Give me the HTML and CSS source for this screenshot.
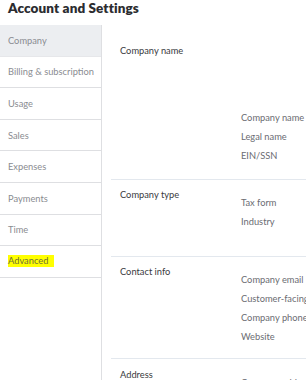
FILE: index.html
```html
<!DOCTYPE html>
<html>
<head>
<meta charset="utf-8">
<link rel="stylesheet" href="styles.css">
</head>
<body>
<div class="page">
  <h1 class="title">Account and Settings</h1>
  <div class="layout">
    <nav class="sidebar">
      <div class="nav-item active">Company</div>
      <div class="nav-item">Billing &amp; subscription</div>
      <div class="nav-item">Usage</div>
      <div class="nav-item">Sales</div>
      <div class="nav-item">Expenses</div>
      <div class="nav-item">Payments</div>
      <div class="nav-item">Time</div>
      <div class="nav-item"><span class="highlight">Advanced</span></div>
    </nav>
    <main class="main">
      <section class="section s1">
        <div class="label">Company name</div>
        <div class="fields f1">
          <div class="field">Company name</div>
          <div class="field">Legal name</div>
          <div class="field">EIN/SSN</div>
        </div>
      </section>
      <section class="section s2">
        <div class="label">Company type</div>
        <div class="fields">
          <div class="field">Tax form</div>
          <div class="field">Industry</div>
        </div>
      </section>
      <section class="section s3">
        <div class="label">Contact info</div>
        <div class="fields">
          <div class="field">Company email</div>
          <div class="field">Customer-facing email</div>
          <div class="field">Company phone</div>
          <div class="field">Website</div>
        </div>
      </section>
      <section class="section s4">
        <div class="label">Address</div>
        <div class="fields">
          <div class="field">Company address</div>
          <div class="field">Customer-facing address</div>
        </div>
      </section>
    </main>
  </div>
</div>
</body>
</html>
```

FILE: styles.css
```css
* { box-sizing: border-box; }
html, body { margin: 0; padding: 0; background: #fff; }
body {
  font-family: Lato, "Open Sans", Arial, sans-serif;
  width: 306px;
  height: 380px;
  overflow: hidden;
}
.page { display: flex; flex-direction: column; height: 380px; }
.title {
  margin: 0;
  padding: 0 0 0 8px;
  height: 25px;
  line-height: 17px;
  font-size: 13.5px;
  font-weight: 800;
  color: #2b2c30;
  letter-spacing: 0.1px;
}
.layout { display: flex; flex: 1; min-height: 0; }
.sidebar {
  width: 102px;
  flex: none;
  border-right: 1px solid #dedfe2;
  display: flex;
  flex-direction: column;
}
.nav-item {
  height: 31.6px;
  flex: none;
  display: flex;
  align-items: center;
  padding-left: 8px;
  font-size: 9.3px;
  color: #8a8c91;
  border-bottom: 1px solid #dedfe2;
  white-space: nowrap;
}
.nav-item.active { background: #eceef1; border-bottom-color: #e6e7ea; }
.highlight { background: #ffff00; color: #6e6f3a; padding: 0 6px 0 0; line-height: 12px; }
.main { flex: 1; min-width: 0; padding-left: 9px; overflow: hidden; }
.section {
  display: grid;
  grid-template-columns: 121px 1fr;
  padding-left: 9px;
  border-bottom: 1px solid #e3e8ee;
}
.label {
  font-size: 9.3px;
  line-height: 19px;
  color: #393a3d;
  white-space: nowrap;
}
.fields { display: flex; flex-direction: column; padding-top: 8px; }
.field {
  font-size: 9.3px;
  line-height: 19px;
  color: #6b6c72;
  white-space: nowrap;
}
.s1 { padding-top: 16px; padding-bottom: 14.5px; }
.s1 .fields { padding-top: 66.5px; }
.s2 { padding-top: 4.5px; padding-bottom: 25.5px; }
.s3 { padding-top: 4.5px; padding-bottom: 12.5px; }
.s4 { padding-top: 5.5px; border-bottom: none; }
```
